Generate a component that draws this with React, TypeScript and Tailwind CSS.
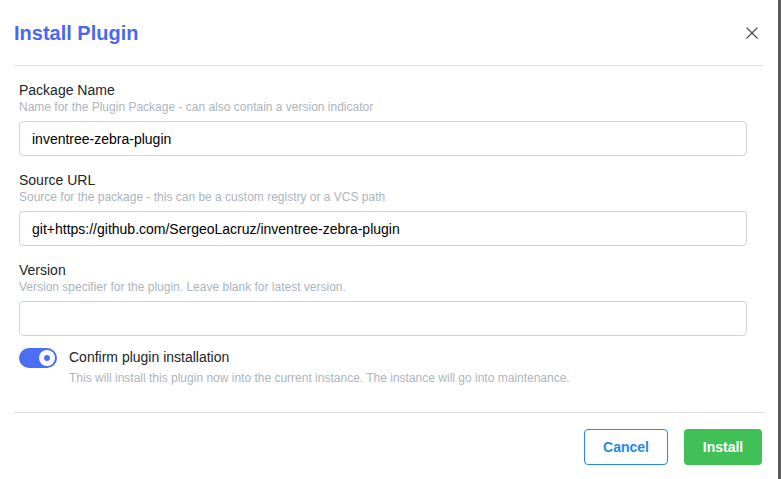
import { X } from 'lucide-react';

const fields = [
  {
    label: 'Package Name',
    description: 'Name for the Plugin Package - can also contain a version indicator',
    value: 'inventree-zebra-plugin',
  },
  {
    label: 'Source URL',
    description: 'Source for the package - this can be a custom registry or a VCS path',
    value: 'git+https://github.com/SergeoLacruz/inventree-zebra-plugin',
  },
  {
    label: 'Version',
    description: 'Version specifier for the plugin. Leave blank for latest version.',
    value: '',
  },
];

const App = () => {
  return (
    <div
      className="flex h-[479px] w-[781px] bg-[#5c5c5c]"
      style={{ fontFamily: '"Liberation Sans", Arial, sans-serif' }}
    >
      <div className="flex h-full w-[778px] flex-col bg-white">
        <div className="flex h-[65px] items-center justify-between pl-[14px] pr-[16px]">
          <h2 className="text-[20px] font-bold text-[#4869ee]">Install Plugin</h2>
          <X size={20} strokeWidth={1.5} className="text-[#495057]" />
        </div>
        <div className="mx-[14px] h-px bg-[#dee2e6]" />

        <div className="flex flex-col gap-[16px] pl-[19px] pr-[31px] pt-[16px]">
          {fields.map((field) => (
            <div key={field.label} className="flex flex-col">
              <label className="h-[17px] text-[14px] leading-[17px] text-[#212529]">
                {field.label}
              </label>
              <p className="mt-[1px] h-[14px] text-[12px] leading-[14px] text-[#adb5bd]">
                {field.description}
              </p>
              <input
                readOnly
                value={field.value}
                className="mt-[7px] h-[35px] rounded-[4px] border border-[#ced4da] px-[12px] text-[14px] text-black outline-none"
              />
            </div>
          ))}
        </div>

        <div className="mt-[11px] flex gap-[12px] pl-[19px]">
          <div className="mt-[1px] flex h-[20px] w-[38px] items-center justify-end rounded-full bg-[#4c6ef5] pr-[2px]">
            <div className="flex h-[16px] w-[16px] items-center justify-center rounded-full bg-white">
              <div className="h-[6px] w-[6px] rounded-full bg-[#4c6ef5]" />
            </div>
          </div>
          <div className="flex flex-col">
            <span className="text-[14px] leading-[20px] text-[#212529]">
              Confirm plugin installation
            </span>
            <span className="mt-[4px] text-[12px] leading-[14px] text-[#adb5bd]">
              This will install this plugin now into the current instance. The instance will go into maintenance.
            </span>
          </div>
        </div>

        <div className="mx-[14px] mt-[27px] h-px bg-[#dee2e6]" />

        <div className="flex justify-end gap-[16px] pr-[16px] pt-[16px]">
          <button
            type="button"
            className="h-[36px] w-[84px] rounded-[4px] border border-[#228be6] bg-white text-[14px] font-bold text-[#228be6]"
          >
            Cancel
          </button>
          <button
            type="button"
            className="h-[36px] w-[78px] rounded-[4px] bg-[#40c057] text-[14px] font-bold text-white"
          >
            Install
          </button>
        </div>
      </div>
    </div>
  );
};

export default App;
